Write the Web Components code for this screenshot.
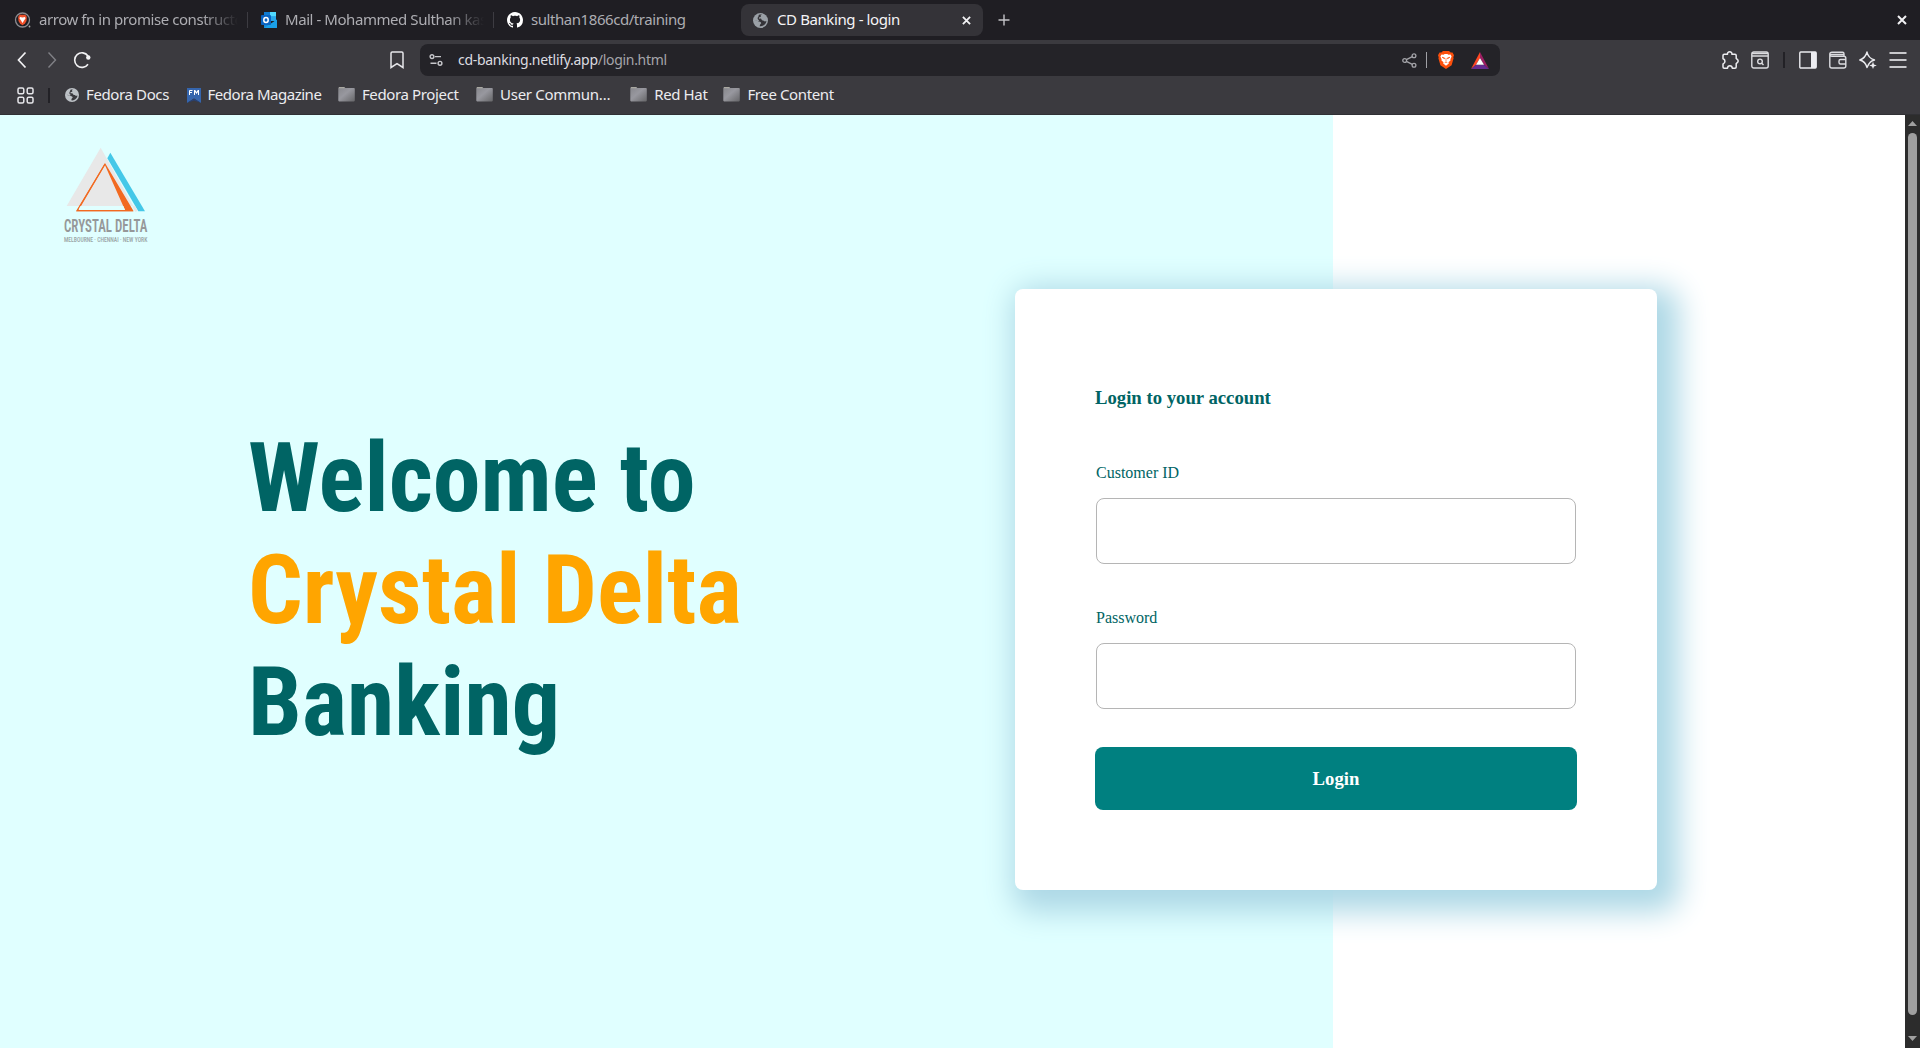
<!DOCTYPE html>
<html lang="en">
<head>
<meta charset="utf-8">
<title>CD Banking - login</title>
<style>
html,body{margin:0;height:100%;overflow:hidden}
</style>
</head>
<body>
<browser-window></browser-window>
<script>
const ICONS = {
  brave: ['0 0 18 18', `<circle cx="8.500" cy="9" r="7" fill="none" stroke="#8b8b90" stroke-width="1.300"/><path d="M5 4.500 6 3.800h5l1 .7.8 1.600-.3 4L11 12.600 8.500 14.300 6 12.600 4.500 10.100 4.200 6.100z" fill="#f0502a"/><path d="M6 6l2.500.6L11 6l.5 1.500L10 9.500 8.500 12 7 9.500 5.500 7.500z" fill="#fff"/><circle cx="15.500" cy="15.500" r=".9" fill="#aaa"/>`],
  outlook: ['0 0 16 16', `<path d="M3 0h12v9H3z" fill="#1490df"/><path d="M3 0h6v4.500H3z" fill="#0f7bd0"/><path d="M9 0h6v4.500H9z" fill="#50d9ff"/><path d="M9 4.500h6V9H9z" fill="#28a8ea"/><path d="M3 9l7 3.500L16 7.500V16H3z" fill="#1587d8"/><path d="M16 7.500 3 16h12.500l.5-.5z" fill="#1aa0e8"/><rect y="3" width="10" height="10" rx="1" fill="#0a63c0"/><ellipse cx="5" cy="8" rx="2.200" ry="2.500" fill="none" stroke="#fff" stroke-width="1.500"/>`],
  github: ['0 0 16 16', `<path fill="#fff" d="M8 0C3.580 0 0 3.580 0 8c0 3.540 2.290 6.530 5.470 7.590.4.070.55-.17.55-.38 0-.19-.01-.82-.01-1.490-2.010.37-2.530-.49-2.690-.94-.09-.23-.48-.94-.82-1.130-.28-.15-.68-.52-.01-.53.63-.01 1.080.58 1.230.82.720 1.210 1.870.87 2.330.66.070-.52.28-.87.51-1.070-1.780-.2-3.640-.89-3.640-3.950 0-.87.31-1.590.82-2.150-.08-.2-.36-1.020.08-2.120 0 0 .67-.21 2.200.82.64-.18 1.320-.27 2-.27s1.360.09 2 .27c1.530-1.040 2.200-.82 2.200-.82.44 1.100.16 1.920.08 2.120.51.56.82 1.270.82 2.150 0 3.070-1.870 3.750-3.650 3.950.29.25.54.73.54 1.480 0 1.070-.01 1.930-.01 2.200 0 .21.15.46.55.38A8.010 8.010 0 0 0 16 8c0-4.420-3.580-8-8-8z"/>`],
  globe: ['0 0 16 16', `<circle cx="8" cy="8" r="8" fill="currentColor"/><path d="M9.500 1.800c-1.500.3-1.800 1.200-1 1.900-.6 1-1.700.5-2.200 1.300-.3.900.5 1.200 1.200 1 1-.2 1.500.5 1.700 1.200.4 1.200 2 .5 2.600 1.300.3.700 1.500.6 2.500 0-.3 2.300-1.500 4-3.400 4.900-1.400.9-2.800.9-3.900.6.8-1.200.3-2 1.300-2.500.9-.6.200-1.900-.9-2.200-1.500-.4-2.600-1.200-3.900-1.100L1.700 7.600l4 .8c.8 0 1-.5.300-1C5 6.500 4.500 5.500 5.300 4.500c.8-.8.4-1.300.9-2.400 1-.5 2.300-.6 3.300-.3z" fill="var(--hole)"/>`],
  close: ['0 0 10 10', `<path d="M1 1l8 8M9 1L1 9" stroke="#f2f2f4" stroke-width="2"/>`],
  plus: ['0 0 12 12', `<path d="M6 .5v11M.5 6h11" stroke="#c4c4c8" stroke-width="1.400"/>`],
  back: ['0 0 10 18', `<path d="M8.500 1.500 1.500 9l7 7.500" fill="none" stroke="#f2f2f4" stroke-width="1.700"/>`],
  fwd: ['0 0 10 18', `<path d="M1.500 1.500 8.500 9l-7 7.500" fill="none" stroke="#808086" stroke-width="1.400"/>`],
  reload: ['0 0 18 18', `<path d="M15 13.200A7.300 7.300 0 1 1 15 5" fill="none" stroke="#f2f2f4" stroke-width="1.600"/><circle cx="15.300" cy="6.500" r="2.200" fill="#f2f2f4"/>`],
  bookmark: ['0 0 14 18', `<path d="M1 2.200Q1 1 2.200 1h9.600Q13 1 13 2.200v14.300L7 12.600 1 16.500z" fill="none" stroke="#e6e6ea" stroke-width="1.500"/>`],
  tune: ['0 0 14 14', `<g fill="none" stroke="#c8c8cc" stroke-width="1.400"><circle cx="3" cy="3.600" r="1.900"/><path d="M6 3.600h6M1.500 10.300h6"/><circle cx="11" cy="10.300" r="1.900"/></g>`],
  share: ['0 0 15 15', `<g fill="none" stroke="#a3a3a8" stroke-width="1.300"><circle cx="2.700" cy="7.500" r="1.900"/><circle cx="12" cy="2.800" r="1.900"/><circle cx="12" cy="12.200" r="1.900"/><path d="M4.400 6.600l5.900-3M4.400 8.400l5.900 3"/></g>`],
  lion: ['0 0 16 18', `<path d="M3.300 1.500 5 0h6l1.700 1.500 1.800 0L16 4.200l-.7 2 .3 1-2 7L8 18l-5.600-3.800-2-7 .3-1L0 4.200l1.500-2.700z" fill="#fb4f0c"/><path d="M3.500 3.500l2 .3L6.700 3h2.600l1.200.8 2-.3 1.100 2-1.200 2.800.1 1.200-2 1.800.3 1.200L8 14.800l-2.800-2.300.3-1.200-2-1.800.1-1.200L2.400 5.500z" fill="#fff"/><path d="M4 6.200l2.700.8-.3.800zM12 6.200l-2.700.8.300.8zM8 7v3.300M6.700 11.600 8 10.900l1.300.7" fill="#fb4f0c" stroke="#fb4f0c" stroke-width=".6"/>`],
  bat: ['0 0 18 17', `<path d="M9 0 0 17l5-4.200L9 6z" fill="#ff4724"/><path d="M9 0l9 17-5-4.200L9 6z" fill="#9e1f63"/><path d="M0 17h18l-5-4.200H5z" fill="#662d91"/><path d="M9 6l4 6.800H5z" fill="#fff"/>`],
  puzzle: ['0 0 18 18', `<path d="M2 4.500Q2 3.300 3.200 3.300H6.500C6.200 1.700 7.300.8 8.700.8s2.500.9 2.200 2.500H14q1.200 0 1.200 1.200V7.400C16 8 17.200 8.700 17.200 10s-1.200 2-2 2.600V16q0 1.200-1.200 1.200H11.300C11 14 6.700 14 6.500 17.200H3.200Q2 17.200 2 16V12.900C4.600 12.300 4.600 8.300 2 7.700z" fill="none" stroke="#ececf0" stroke-width="1.500" stroke-linejoin="round"/>`],
  find: ['0 0 18 18', `<rect x=".8" y="1" width="16.400" height="16" rx="2" fill="none" stroke="#dcdce0" stroke-width="1.400"/><path d="M1 2.500h16M1 5h16" stroke="#dcdce0" stroke-width="1.300"/><circle cx="9" cy="10.400" r="2.300" fill="none" stroke="#dcdce0" stroke-width="1.400"/><path d="M10.500 12l2 2" stroke="#dcdce0" stroke-width="1.400"/>`],
  panel: ['0 0 18 18', `<rect x=".8" y="1" width="16.400" height="16" rx="1" fill="none" stroke="#ececf0" stroke-width="1.400"/><path d="M12 1h5v16h-5z" fill="#ececf0"/>`],
  wallet: ['0 0 18 18', `<g fill="none" stroke="#dcdce0" stroke-width="1.400"><path d="M.8 3.200V15q0 2 2 2h12q2 0 2-2V7.200q0-2-2-2H3q-2.200 0-2.200-2T3 1.200h10.500q1.500 0 1.500 1.500V5"/><path d="M1 3.500h14M17 8.500h-5.500q-1.500 0-1.500 1.500v1.500q0 1.500 1.500 1.500H17"/></g>`],
  leo: ['0 0 18 18', `<path d="M8 1Q9 6.800 15.500 9 12 10 11 11.500 9.500 13 8 16.500 6.500 10.500.8 9 6.500 7 8 1z" fill="none" stroke="#ececf0" stroke-width="1.400" stroke-linejoin="round"/><path d="M14 10.800l1 2.600 2.800 1-2.800 1-1 2.600-1-2.600-2.800-1 2.800-1z" fill="#ececf0"/>`],
  menu: ['0 0 18 18', `<path d="M.5 2h17M.5 9h17M.5 16h17" stroke="#c9c9cd" stroke-width="2"/>`],
  grid: ['0 0 17 17', `<g fill="none" stroke="#e6e6ea" stroke-width="1.500"><rect x="1" y="1" width="5.800" height="5.800" rx="1.500"/><rect x="10.200" y="1" width="5.800" height="5.800" rx="1.500"/><rect x="1" y="10.200" width="5.800" height="5.800" rx="1.500"/><rect x="10.200" y="10.200" width="5.800" height="5.800" rx="1.500"/></g>`],
  fm: ['0 0 14 15', `<path d="M0 0h14v15L7 10.500 0 15z" fill="#3565ad"/><path d="M0 15l7-4.500L14 15l-7-2.500z" fill="#294172"/><path d="M2.500 7V2.500H5.500M2.500 4.500H5" fill="none" stroke="#fff" stroke-width="1"/><path d="M7 2h1.200l1.300 2 1.300-2H12v5h-1V4L9.500 6 8 4v3H7z" fill="#fff"/>`],
  folder: ['0 0 17 15', `<defs><linearGradient id="g" x1="0" y1="0" x2="1" y2="1"><stop offset="0" stop-color="#86868b"/><stop offset=".45" stop-color="#98989f"/><stop offset="1" stop-color="#666669"/></linearGradient></defs><path d="M.3 1q0-.8.800-.8H6.500l.8.900h8.700q.8 0 .8.800V13.600q0 .8-.8.800H1.100q-.8 0-.8-.8z" fill="url(#g)"/><path d="M1 .7h5.500" stroke="#b5b4aa" stroke-width="1"/>`],
  up: ['0 0 10 5', `<path d="M5 0l5 5H0z" fill="#a0a0a0"/>`],
  down: ['0 0 10 5', `<path d="M5 5l5-5H0z" fill="#a0a0a0"/>`]
};
function define(name, render){
  customElements.define(name, class extends HTMLElement{
    constructor(){super();this.attachShadow({mode:'open'})}
    connectedCallback(){this.shadowRoot.innerHTML=render(this)}
  });
}
define('ui-icon', el=>{
  const [vb,body]=ICONS[el.getAttribute('name')];
  const [, ,w,h]=vb.split(' ');
  return `<style>:host{display:block;flex:none;width:${el.getAttribute('w')||w}px;height:${el.getAttribute('h')||h}px}svg{display:block;width:100%;height:100%}</style><svg viewBox="${vb}" preserveAspectRatio="none">${body}</svg>`;
});
define('browser-tab', el=>`<style>
:host{display:flex;align-items:center;box-sizing:border-box;width:247px;height:32px;padding-left:var(--pad,14px);color:#adadb2;font-size:15px;letter-spacing:-.44px;--hole:#1f1e23}
:host([active]){width:242px;background:#343338;border-radius:8px;color:#f4f4f6;letter-spacing:-.4px;padding:0 12px 0 12px;--hole:#343338}
.t{flex:1;white-space:nowrap;overflow:hidden;margin:0 0 2px var(--gap,8px)}
:host([fade]) .t{-webkit-mask:linear-gradient(90deg,#000 calc(100% - 36px),transparent 100%);mask:linear-gradient(90deg,#000 calc(100% - 36px),transparent 100%)}
.s{width:1px;height:16px;background:#3d3c42;margin-left:9px}
ui-icon{color:#9aa0a6}
</style><ui-icon name="${el.getAttribute('icon')}" ${el.hasAttribute('active')?'w="15" h="15"':''}></ui-icon><span class="t"><slot></slot></span>${el.hasAttribute('active')?'<ui-icon name="close" w="9" h="9"></ui-icon>':el.hasAttribute('fade')?'<i class="s"></i>':''}`);
define('tab-strip', ()=>`<style>
:host{display:flex;align-items:center;height:40px;background:#1f1e23;padding-right:13px}
.plus{margin:0 auto 0 15px}
</style>
<browser-tab icon="brave" fade style="width:248px;--gap:7px">arrow fn in promise constructor</browser-tab>
<browser-tab icon="outlook" fade style="width:246px;--pad:13px">Mail - Mohammed Sulthan kasim</browser-tab>
<browser-tab icon="github" style="width:247px;--pad:13px">sulthan1866cd/training</browser-tab>
<browser-tab icon="globe" active style="--gap:9px">CD Banking - login</browser-tab>
<ui-icon class="plus" name="plus"></ui-icon><ui-icon name="close"></ui-icon>`);
define('address-bar', ()=>`<style>
:host{display:flex;align-items:center;box-sizing:border-box;width:1080px;height:32px;border-radius:8px;background:#242328;padding:0 11px 0 9px;color:#dcdce0;font-size:14px;letter-spacing:-.29px;margin-left:16px}
.u{margin:0 auto 1px 15px}.d{color:#a5a5aa}
.l{width:1px;height:16px;background:#a0a0a5;margin:0 11px 0 9px}
</style><ui-icon name="tune"></ui-icon><span class="u">cd-banking.netlify.app<span class="d">/login.html</span></span><ui-icon name="share"></ui-icon><i class="l"></i><ui-icon name="lion"></ui-icon><ui-icon name="bat" style="margin-left:17px"></ui-icon>`);
define('nav-bar', ()=>`<style>
:host{display:flex;align-items:center;height:40px;padding:0 13px 0 17px}
.r{display:flex;align-items:center;gap:12px;margin-left:auto}
.l{width:2px;height:16px;background:#222126;margin:0 2px}
</style><ui-icon name="back"></ui-icon><ui-icon name="fwd" style="margin-left:20px"></ui-icon><ui-icon name="reload" style="margin-left:16px"></ui-icon>
<ui-icon name="bookmark" style="margin-left:299px"></ui-icon><address-bar></address-bar>
<div class="r"><ui-icon name="puzzle"></ui-icon><ui-icon name="find"></ui-icon><i class="l"></i><ui-icon name="panel"></ui-icon><ui-icon name="wallet"></ui-icon><ui-icon name="leo"></ui-icon><ui-icon name="menu"></ui-icon></div>`);
define('book-mark', el=>`<style>
:host{display:flex;align-items:center;gap:7px;color:#ececef;font-size:15px;letter-spacing:-.38px;white-space:nowrap;--hole:#3b3a3f}
span{margin-bottom:2px}
ui-icon{color:#bdc1c6}
ui-icon[name=folder]{margin-bottom:2px}
</style><ui-icon name="${el.getAttribute('icon')}" ${el.getAttribute('icon')==='globe'?'w="14" h="14"':''}></ui-icon><span><slot></slot></span>`);
define('bookmark-bar', ()=>`<style>
:host{display:flex;align-items:center;height:30px;padding:0 17px}
.l{width:2px;height:15px;background:#222126;margin:0 15px 0 14px}
book-mark{margin-right:17.500px}
</style><ui-icon name="grid" style="margin-top:1px"></ui-icon><i class="l"></i>
<book-mark icon="globe">Fedora Docs</book-mark><book-mark icon="fm" style="letter-spacing:-.48px;margin-right:16.500px">Fedora Magazine</book-mark><book-mark icon="folder" style="letter-spacing:-.36px">Fedora Project</book-mark><book-mark icon="folder" style="letter-spacing:-.3px;margin-right:20px">User Commun…</book-mark><book-mark icon="folder" style="margin-right:16px">Red Hat</book-mark><book-mark icon="folder">Free Content</book-mark>`);
define('brand-logo', ()=>`<style>:host{display:block;width:170px;height:130px}svg{display:block;overflow:visible}</style>
<svg width="170" height="130" viewBox="0 0 510 390"><path d="M182 53 80 228h200z" fill="#e8e8e8"/><path d="M211 68l-9 17 93 159h20z" fill="#45c8e8"/><path d="M280 228l10 16" stroke="#e8e8e8" stroke-width="8"/><path d="M195 99l86 145H109zM195 106l-79 134h139z" fill="#f26a21" fill-rule="evenodd"/><path d="M116 228h134l5 12H116z" fill="#e0ffff"/><path d="M195 102 111 242h168" fill="none" stroke="#f26a21" stroke-width="3.500"/>
<g fill="#969899" font-family="Roboto Condensed,Roboto,sans-serif"><text x="72" y="306" font-size="54" font-weight="600" textLength="250" lengthAdjust="spacingAndGlyphs">CRYSTAL DELTA</text><text x="72" y="336" font-size="23" font-weight="500" fill="#9aa5a5" textLength="250" lengthAdjust="spacingAndGlyphs">MELBOURNE · CHENNAI · NEW YORK</text></g></svg>`);
define('welcome-title', ()=>`<style>:host{display:block}
h1{margin:0;font:bold 96px/112px "Roboto Condensed",Roboto,sans-serif;font-stretch:75%;color:#006464;white-space:nowrap}
span{color:orange}</style><h1>Welcome to<br><span>Crystal Delta</span><br>Banking</h1>`);
define('form-field', el=>`<style>:host{display:block;margin:0 1px}label{display:block;font-size:16px;line-height:18px;color:#006464}
input{display:block;box-sizing:border-box;width:480px;height:66px;margin:16px 0 0;border:1px solid #b5b5b5;border-radius:8px;background:#fff;outline:none}</style><label><slot></slot></label><input type="${el.getAttribute('type')}">`);
define('login-card', ()=>`<style>
:host{display:block;box-sizing:border-box;width:642px;height:601px;padding:98px 80px 0;background:#fff;border-radius:8px;box-shadow:10px 10px 30px 12px lightblue;font-family:"Liberation Serif",serif}
h3{margin:0 0 55px;font-size:18.720px;line-height:22px;color:#006464}
.p{margin-top:45px}
button{display:block;width:482px;height:63px;margin-top:38px;border:0;border-radius:8px;background:teal;color:#fff;font:bold 18.720px "Liberation Serif",serif}
</style><h3>Login to your account</h3><form-field type="text">Customer ID</form-field><form-field class="p" type="password">Password</form-field><button>Login</button>`);
define('login-page', ()=>`<style>
:host{display:flex;flex:1;align-items:flex-start;background:linear-gradient(90deg,#e0ffff 1333px,#fff 1333px);overflow:hidden}
.left{width:1015px}
brand-logo{margin:15px 0 0 40px}
welcome-title{margin:162px 0 0 248px}
login-card{margin-top:174px}
</style><div class="left"><brand-logo></brand-logo><welcome-title></welcome-title></div><login-card></login-card>`);
define('scroll-bar', ()=>`<style>
:host{display:flex;flex-direction:column;align-items:center;box-sizing:border-box;width:15px;background:#2c2c2c;padding:6px 0 7px}
.t{flex:1;width:9px;border-radius:5px;background:#9f9f9f;margin:7px 0 21px}
</style><ui-icon name="up" w="9"></ui-icon><div class="t"></div><ui-icon name="down" w="9"></ui-icon>`);
define('browser-window', ()=>`<style>
:host{display:flex;flex-direction:column;width:1920px;height:1048px;font-family:"Noto Sans",sans-serif}
.chrome{box-sizing:border-box;height:75px;background:#3b3a3f;border-bottom:1px solid #303034}
.view{display:flex;flex:1;min-height:0}
</style><tab-strip></tab-strip><div class="chrome"><nav-bar></nav-bar><bookmark-bar></bookmark-bar></div><div class="view"><login-page></login-page><scroll-bar></scroll-bar></div>`);
</script>
</body>
</html>
